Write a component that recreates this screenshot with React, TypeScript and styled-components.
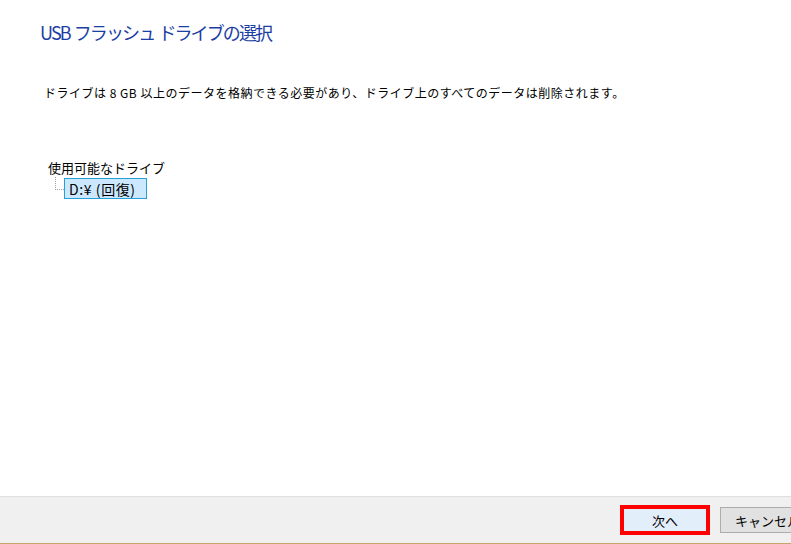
import * as React from 'react';
import styled, { createGlobalStyle } from 'styled-components';

const FontStack = `"Noto Sans CJK JP", "Noto Sans", sans-serif`;

const GlobalStyle = createGlobalStyle`
    html, body {
        margin: 0;
        padding: 0;
        background: #ffffff;
    }
    body {
        font-family: ${FontStack};
        color: #000000;
    }
`;

const Page = styled.div`
    width: 791px;
    height: 544px;
    display: flex;
    flex-direction: column;
    overflow: hidden;
`;

const Content = styled.div`
    flex-grow: 1;
    padding: 18px 0 0 40px;
    display: flex;
    flex-direction: column;
`;

const Title = styled.h1`
    margin: 0;
    font-size: 18px;
    font-weight: 400;
    line-height: 28px;
    letter-spacing: -1.9px;
    word-spacing: 2px;
    color: #1b3ea3;
`;

const Description = styled.p`
    margin: 38px 0 0 4px;
    font-size: 12px;
    line-height: 18px;
    letter-spacing: 0.5px;
`;

const TreeSection = styled.div`
    margin: 57px 0 0 8px;
    display: flex;
    flex-direction: column;
`;

const TreeLabel = styled.div`
    font-size: 13px;
    line-height: 18px;
`;

const TreeRow = styled.div`
    display: flex;
    align-items: flex-start;
`;

const Connector = styled.div`
    width: 8px;
    height: 12px;
    margin-left: 7px;
    border-left: 1px dotted #a0a0a0;
    border-bottom: 1px dotted #a0a0a0;
`;

const TreeItem = styled.div<{ selected?: boolean }>`
    margin-top: 1px;
    height: 19px;
    width: 77px;
    padding-left: 4px;
    box-sizing: content-box;
    display: flex;
    align-items: center;
    font-size: 14px;
    letter-spacing: 0.6px;
    background: ${props => props.selected ? '#cce8ff' : 'transparent'};
    border: 1px solid ${props => props.selected ? '#26a0da' : 'transparent'};
`;

const Footer = styled.div`
    height: 46px;
    flex-shrink: 0;
    background: #f0f0f0;
    border-top: 1px solid #dfdfdf;
    border-bottom: 1px solid #c8a66a;
    display: flex;
    align-items: center;
    justify-content: flex-end;
    gap: 10px;
    margin-right: -24px;
`;

const Button = styled.button<{ highlighted?: boolean; width: number }>`
    box-sizing: border-box;
    flex-shrink: 0;
    width: ${props => props.width + 'px'};
    height: ${props => props.highlighted ? '30px' : '26px'};
    font-family: ${FontStack};
    font-size: 13px;
    color: #000000;
    padding: 0;
    background: ${props => props.highlighted ? '#e3eefb' : '#e1e1e1'};
    border: ${props => props.highlighted ? '4px solid #ff0000' : '1px solid #adadad'};
    display: flex;
    align-items: center;
    justify-content: center;
`;

const App: React.FC = () => {
    return (
        <Page>
            <GlobalStyle />
            <Content>
                <Title>USB フラッシュ ドライブの選択</Title>
                <Description>
                    ドライブは 8 GB 以上のデータを格納できる必要があり、ドライブ上のすべてのデータは削除されます。
                </Description>
                <TreeSection>
                    <TreeLabel>使用可能なドライブ</TreeLabel>
                    <TreeRow>
                        <Connector />
                        <TreeItem selected>D:¥ (回復)</TreeItem>
                    </TreeRow>
                </TreeSection>
            </Content>
            <Footer>
                <Button highlighted width={90}>次へ</Button>
                <Button width={95}>キャンセル</Button>
            </Footer>
        </Page>
    );
};

export default App;
